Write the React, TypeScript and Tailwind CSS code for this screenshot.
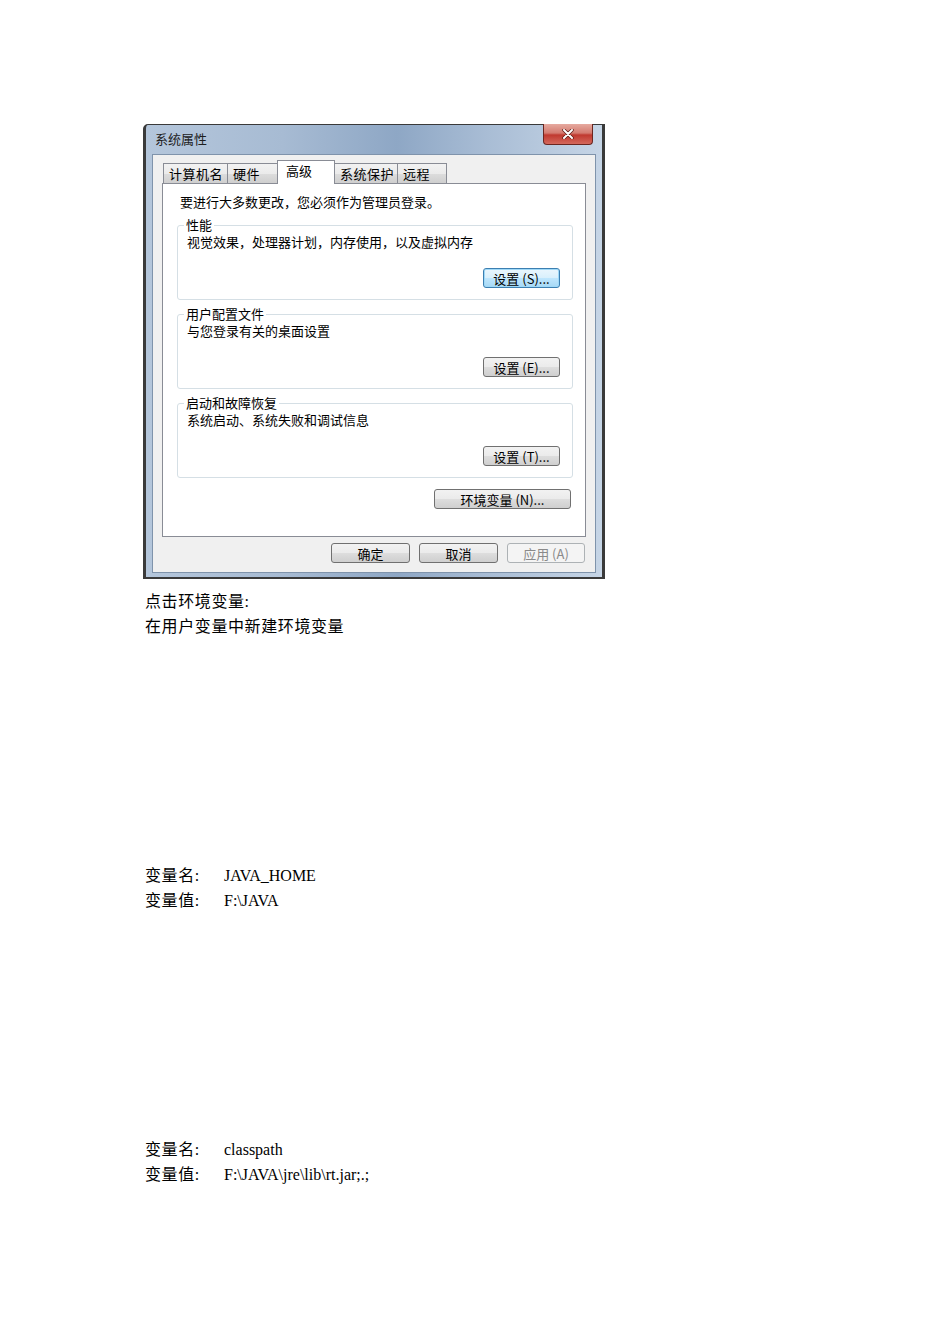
import type { ReactNode } from "react";

const ui = "font-['Noto_Sans_CJK_SC','Liberation_Sans',sans-serif]";
const doc = "font-['Liberation_Serif','Noto_Sans_CJK_SC',serif]";

type BtnProps = { children: ReactNode; w: string; focused?: boolean; disabled?: boolean };

// Win7 style push button
function Btn({ children, w, focused, disabled }: BtnProps) {
  let look =
    "border-[#707070] bg-[linear-gradient(180deg,#f2f2f2_0%,#ebebeb_48%,#dddddd_52%,#cfcfcf_100%)] text-black";
  if (focused)
    look =
      "border-[#3c7fb1] bg-[linear-gradient(180deg,#eaf6fd_0%,#d9f0fc_48%,#bee6fd_52%,#a7d9f5_100%)] text-black shadow-[inset_0_0_0_1px_#9fd9f8]";
  if (disabled) look = "border-[#adb2b5] bg-[#f4f4f4] text-[#8a8a8a]";
  return (
    <div
      className={`${w} h-[20px] flex items-center justify-center rounded-[3px] border text-[13px] leading-none ${look}`}
    >
      {children}
    </div>
  );
}

function Group({ title, text, btn }: { title: string; text: string; btn: ReactNode }) {
  return (
    <fieldset className="rounded-[3px] border border-[#d5dfe5] pb-[11px]">
      <legend className="ml-[6px] px-[2px] leading-[16px]">{title}</legend>
      <div className="pl-[9px] pt-px leading-[16px]">{text}</div>
      <div className="mt-[18px] pr-[12px] flex justify-end">{btn}</div>
    </fieldset>
  );
}

const tabs = ["计算机名", "硬件", "高级", "系统保护", "远程"];
const tabW = ["w-[65px]", "w-[51px]", "w-[58px]", "w-[64px]", "w-[50px]"];

function Dialog() {
  return (
    <div
      className={`${ui} w-[462px] h-[455px] rounded-tl-[5px] border-x-[3px] border-t border-b-2 border-[#3a3a3a] bg-[linear-gradient(90deg,#b4c6db_0%,#a7bbd3_30%,#8ea7c5_55%,#a9bdd5_75%,#c6d5e6_100%)] text-[13px] text-black flex flex-col`}
    >
      {/* title bar */}
      <div className="h-[29px] flex justify-between">
        <div className="pl-[9px] pt-[6px] leading-[16px] text-[#1e1e1e]">系统属性</div>
        <div className="mr-[9px] -mt-px w-[50px] h-[21px] rounded-b-[4px] border border-t-0 border-[#6b2620] bg-[linear-gradient(180deg,#e6aaa0_0%,#d47b70_45%,#c0392f_55%,#d4685c_100%)] flex items-center justify-center">
          <svg width="12" height="10" viewBox="0 0 12 10">
            <path d="M2 1 L10 9 M10 1 L2 9" stroke="#5a1a14" strokeWidth="3.4" strokeLinecap="round" />
            <path d="M2 1 L10 9 M10 1 L2 9" stroke="#ffffff" strokeWidth="2" strokeLinecap="round" />
          </svg>
        </div>
      </div>

      {/* client area */}
      <div className="mx-[6px] h-[419px] border border-[#7f93ab] bg-[#f0f0f0] px-[9px] pt-[5px]">
        <div className="flex items-end pl-px">
          {tabs.map((t, i) =>
            i === 2 ? (
              <div
                key={t}
                className={`${tabW[i]} relative z-10 -ml-px -mb-px h-[24px] border border-b-0 border-[#898c95] bg-white pl-[8px] pt-[2px] leading-[16px]`}
              >
                {t}
              </div>
            ) : (
              <div
                key={t}
                className={`${tabW[i]} h-[20px] border border-b-0 border-[#898c95] bg-[linear-gradient(180deg,#f2f2f2_0%,#ebebeb_50%,#dddddd_51%,#cfcfcf_100%)] pl-[5px] pt-[2px] leading-[16px] tracking-[0.5px] -ml-px first:ml-0`}
              >
                {t}
              </div>
            )
          )}
        </div>
        <div className="h-[354px] border border-[#898c95] bg-white pl-[14px] pr-[12px] pt-[10px]">
          <div className="pl-[3px] leading-[16px]">要进行大多数更改，您必须作为管理员登录。</div>
          <div className="mt-[7px]">
            <Group
              title="性能"
              text="视觉效果，处理器计划，内存使用，以及虚拟内存"
              btn={
                <Btn w="w-[77px]" focused>
                  设置 (S)...
                </Btn>
              }
            />
          </div>
          <div className="mt-[6px]">
            <Group title="用户配置文件" text="与您登录有关的桌面设置" btn={<Btn w="w-[77px]">设置 (E)...</Btn>} />
          </div>
          <div className="mt-[6px]">
            <Group title="启动和故障恢复" text="系统启动、系统失败和调试信息" btn={<Btn w="w-[77px]">设置 (T)...</Btn>} />
          </div>
          <div className="mt-[11px] flex justify-end pr-[2px]">
            <Btn w="w-[137px]">环境变量 (N)...</Btn>
          </div>
        </div>
        <div className="mt-[6px] mr-[1px] flex justify-end gap-[9px]">
          <Btn w="w-[79px]">确定</Btn>
          <Btn w="w-[79px]">取消</Btn>
          <Btn w="w-[78px]" disabled>
            应用 (A)
          </Btn>
        </div>
      </div>
    </div>
  );
}

function VarRow({ label, value }: { label: string; value: string }) {
  return (
    <div className="flex leading-[25px]">
      <span className="w-[79px] tracking-[0.6px]">{label}</span>
      <span>{value}</span>
    </div>
  );
}

export default function App() {
  return (
    <div className="min-h-[1344px] bg-white pt-[124px] pl-[143px]">
      <Dialog />
      <div className={`${doc} text-[16px] text-black pl-[2px]`}>
        <div className="mt-[10px] leading-[25px] tracking-[0.6px]">点击环境变量:</div>
        <div className="leading-[25px] tracking-[0.6px]">在用户变量中新建环境变量</div>

        <div className="mt-[224px]">
          <VarRow label="变量名:" value="JAVA_HOME" />
          <VarRow label="变量值:" value="F:\JAVA" />
        </div>

        <div className="mt-[224px]">
          <VarRow label="变量名:" value="classpath" />
          <VarRow label="变量值:" value="F:\JAVA\jre\lib\rt.jar;.;" />
        </div>
      </div>
    </div>
  );
}
